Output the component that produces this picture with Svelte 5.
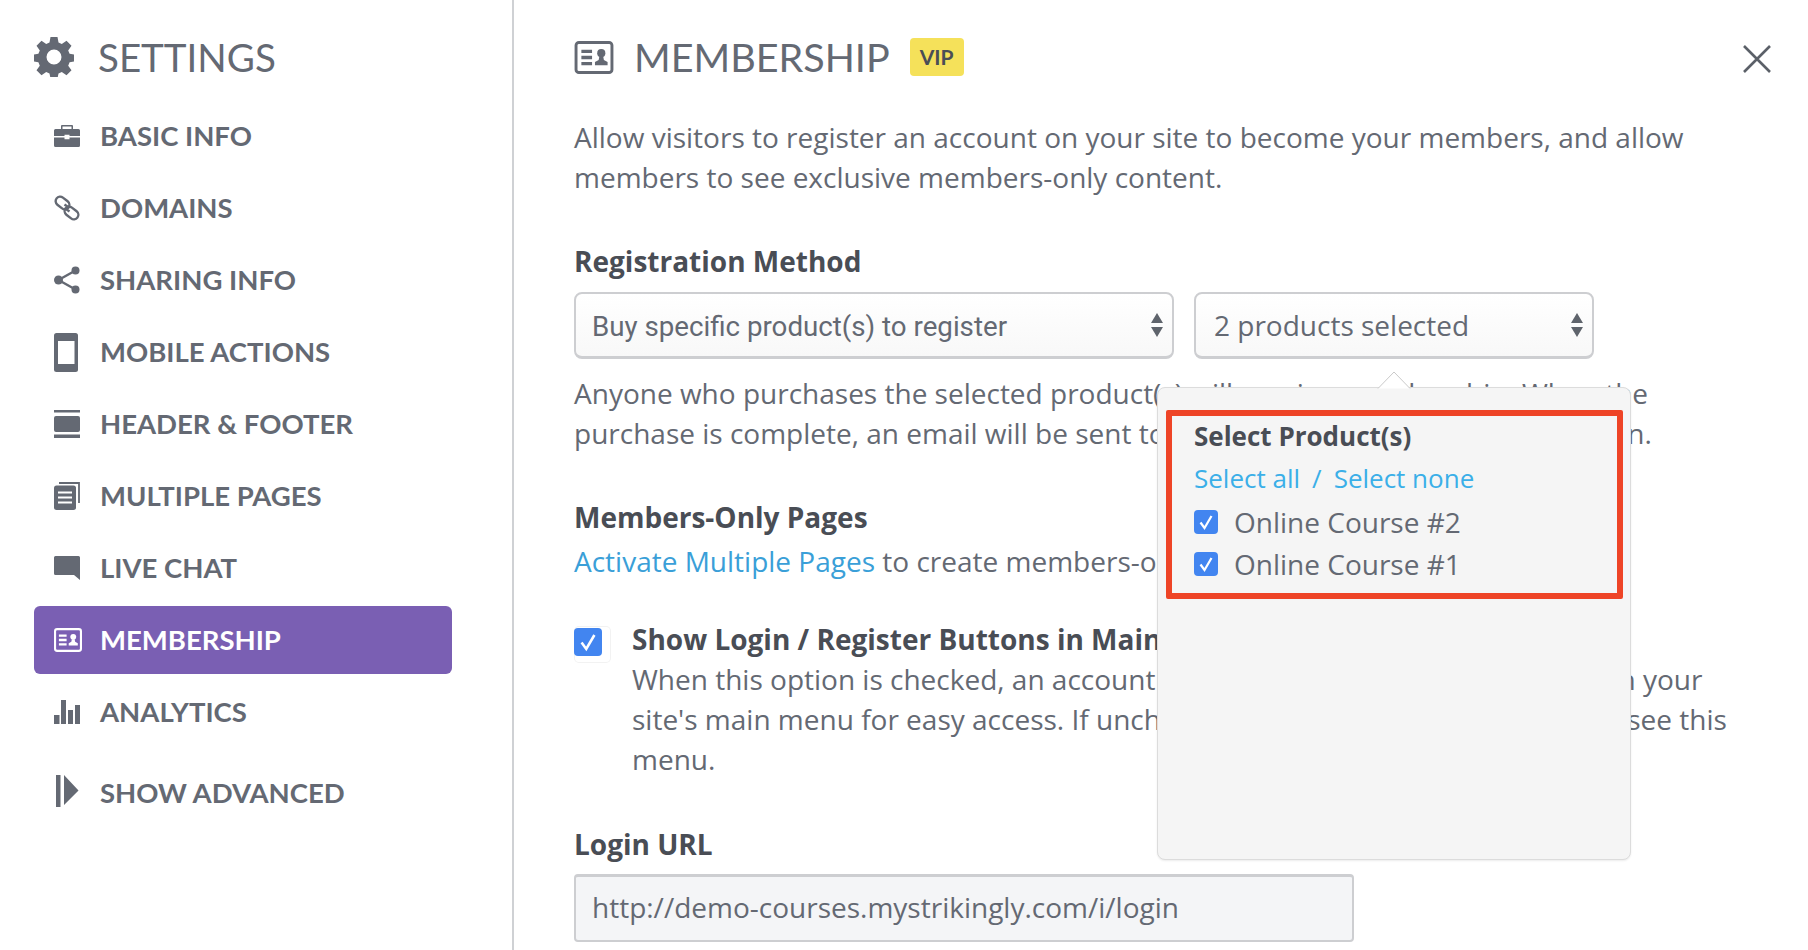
<script>
  const nav = [
    { id: 'brief', label: 'BASIC INFO' },
    { id: 'link', label: 'DOMAINS' },
    { id: 'share', label: 'SHARING INFO' },
    { id: 'mobile', label: 'MOBILE ACTIONS' },
    { id: 'layout', label: 'HEADER & FOOTER' },
    { id: 'pages', label: 'MULTIPLE PAGES' },
    { id: 'chat', label: 'LIVE CHAT' },
    { id: 'card', label: 'MEMBERSHIP', active: true },
    { id: 'bars', label: 'ANALYTICS' },
    { id: 'adv', label: 'SHOW ADVANCED', extra: true }
  ];
</script>

{#snippet card(cls)}
  <svg class={cls} viewBox="0 0 40 34" aria-hidden="true">
    <rect x="1.5" y="1.5" width="37" height="31" rx="3" fill="none" stroke="currentColor" stroke-width="3"/>
    <path fill="currentColor" d="M7 9h11v3.4H7zM7 15.3h11v3.4H7zM7 21.6h11v3.4H7z"/>
    <circle cx="27.5" cy="12.5" r="4.2" fill="currentColor"/>
    <path fill="currentColor" d="M25.5 16h4l.7 3.6 3.8 2V25H21v-3.4l3.8-2z"/>
  </svg>
{/snippet}

{#snippet check(cls)}
  <span class={cls}>
    <svg viewBox="0 0 24 24" aria-hidden="true"><path d="M6.5 12.5l4 5.5 7-12" fill="none" stroke="#fff" stroke-width="2.2"/></svg>
  </span>
{/snippet}

<div class="page">
  <aside class="side">
    <h2 class="side-title">
      <svg class="gear" viewBox="0 0 40 40" aria-hidden="true">
        <path fill="currentColor" fill-rule="evenodd" d="M16.5 0h7l1 5.6 3.3 1.4 4.700-3.300 5 5-3.300 4.700 1.400 3.300 5.400 1v6.600l-5.400 1-1.400 3.400 3.300 4.600-5 5-4.700-3.300-3.300 1.400-1 5.100h-7l-1-5.100-3.300-1.400-4.700 3.300-5-5 3.300-4.600-1.400-3.400-5.400-1v-6.600l5.400-1 1.400-3.300-3.300-4.700 5-5 4.700 3.300 3.300-1.400zM20 12.500a7.500 7.500 0 1 0 0 15 7.500 7.500 0 0 0 0-15z"/>
      </svg>
      <span>SETTINGS</span>
    </h2>
    <nav class="nav">
      {#each nav as item}
        <div class="item" class:active={item.active} class:extra={item.extra}>
          <span class="slot">
            {#if item.id === 'brief'}
              <svg width="26" height="22" viewBox="0 0 26 22"><path fill="currentColor" d="M8 0h10a1 1 0 0 1 1 1v3h-1.500V1.500h-9V4H7V1a1 1 0 0 1 1-1zM1.500 4h23A1.500 1.500 0 0 1 26 5.500V11H15.500V9.800h-5V11H0V5.500A1.500 1.500 0 0 1 1.500 4zM0 12.500h10.500v1.800h5v-1.800H26v8A1.500 1.500 0 0 1 24.500 22h-23A1.500 1.500 0 0 1 0 20.500z"/></svg>
            {:else if item.id === 'link'}
              <svg width="26" height="26" viewBox="0 0 26 26"><g fill="none" stroke="currentColor" stroke-width="2.400"><rect x="1" y="3.500" width="15" height="9" rx="4.500" transform="rotate(38 8.500 8)"/><rect x="10" y="13.500" width="15" height="9" rx="4.500" transform="rotate(38 17.500 18)"/><path d="M10.500 9.500l5 3.500M10.500 13l5 3.500"/></g></svg>
            {:else if item.id === 'share'}
              <svg width="26" height="28" viewBox="0 0 26 28"><g fill="currentColor"><circle cx="4.500" cy="14" r="4.500"/><circle cx="21.500" cy="4.500" r="4"/><circle cx="21.500" cy="23.500" r="4"/></g><path d="M21.500 4.500L4.500 14l17 9.500" fill="none" stroke="currentColor" stroke-width="2.400"/></svg>
            {:else if item.id === 'mobile'}
              <svg width="26" height="39" viewBox="0 0 26 39"><rect width="24" height="39" rx="2.500" fill="currentColor"/><rect x="4" y="8" width="16.500" height="23" fill="#fff"/></svg>
            {:else if item.id === 'layout'}
              <svg width="26" height="28" viewBox="0 0 26 28"><path fill="currentColor" d="M0 0h26v2.500H0zM2 6h22a2 2 0 0 1 2 2v12a2 2 0 0 1-2 2H2a2 2 0 0 1-2-2V8a2 2 0 0 1 2-2zM0 24.500h26V28H0z"/></svg>
            {:else if item.id === 'pages'}
              <svg width="26" height="28" viewBox="0 0 26 28"><path fill="none" stroke="currentColor" stroke-width="1.800" d="M5 1h20v20"/><rect y="3.500" width="22" height="24.500" rx="2.500" fill="currentColor"/><path stroke="#fff" stroke-width="2" d="M4 10.500h14M4 15.500h14M4 20.500h14"/></svg>
            {:else if item.id === 'chat'}
              <svg width="26" height="24" viewBox="0 0 26 24"><path fill="currentColor" d="M1.500 0h23A1.500 1.500 0 0 1 26 1.500V24l-6-5H1.500A1.500 1.500 0 0 1 0 17.500v-16A1.500 1.500 0 0 1 1.500 0z"/></svg>
            {:else if item.id === 'card'}
              {@render card('card-small')}
            {:else if item.id === 'bars'}
              <svg width="26" height="24" viewBox="0 0 26 24"><path fill="currentColor" d="M0 15h5.500v9H0zM7 0h5v24H7z"/><path fill="currentColor" d="M14 10h5v14h-5zM21 5h5v19h-5z"/></svg>
            {:else}
              <svg class="adv-icon" width="26" height="32" viewBox="0 0 26 32"><path fill="currentColor" d="M2 0h4.500v32H2zM10 0l14.500 15.500L10 30z"/></svg>
            {/if}
          </span>
          <span class="label">{item.label}</span>
        </div>
      {/each}
    </nav>
  </aside>

  <main class="main">
    <button class="close" aria-label="Close">
      <svg width="30" height="30" viewBox="0 0 30 30"><path d="M2 2l26 26M28 2L2 28" stroke="#5b6068" stroke-width="2.600" fill="none"/></svg>
    </button>

    <header class="head">
      {@render card('card-big')}
      <h1>MEMBERSHIP</h1>
      <span class="vip">VIP</span>
    </header>

    <p class="intro">Allow visitors to register an account on your site to become your members, and allow<br>members to see exclusive members-only content.</p>

    <h3 class="reg-label">Registration Method</h3>
    <div class="selects">
      <div class="select wide">
        <span>Buy specific product(s) to register</span>
        <span class="arrows"></span>
      </div>
      <div class="select narrow">
        <span>2 products selected</span>
        <span class="arrows"></span>
      </div>
    </div>
    <p class="desc">Anyone who purchases the selected product(s) will receive membership. When the<br>purchase is complete, an email will be sent to learners with their login information.</p>

    <h3 class="pages-label">Members-Only Pages</h3>
    <p class="activate"><a href="#top">Activate Multiple Pages</a> to create members-only pages.</p>

    <div class="option">
      <span class="big-check-wrap">{@render check('big-check')}</span>
      <div>
        <div class="opt-title">Show Login / Register Buttons in Main Menu</div>
        <p class="opt-text">When this option is checked, an account login or register buttons will show in your<br>site's main menu for easy access. If unchecked, visitors with a direct link can see this<br>menu.</p>
      </div>
    </div>

    <h3 class="url-label">Login URL</h3>
    <div class="url">http://demo-courses.mystrikingly.com/i/login</div>

    <div class="pop">
      <svg class="pop-arrow" width="34" height="18" viewBox="0 0 34 18" aria-hidden="true"><path d="M1 17.500L17 1l16 16.500" fill="#fff" stroke="#c9c9c9"/></svg>
      <div class="pop-body">
        <div class="pop-title">Select Product(s)</div>
        <div class="pop-links"><a href="#top">Select all</a><span class="sep">/</span><a href="#top">Select none</a></div>
        <label class="course">{@render check('small-check')}<span>Online Course #2</span></label>
        <label class="course">{@render check('small-check')}<span>Online Course #1</span></label>
      </div>
    </div>
  </main>
</div>

<style>
  :global(body) { margin: 0; background: #fff; overflow: hidden; }
  .page {
    display: flex;
    height: 950px;
    overflow: hidden;
    color: #646973;
    font-family: "Open Sans", sans-serif;
    font-size: 28px;
    line-height: 40px;
  }
  .side {
    flex: none;
    width: 478px;
    border-right: 2px solid #cfd1d4;
    padding: 37px 0 0 34px;
    color: #646973;
    font-family: Lato, sans-serif;
  }
  .side-title {
    display: flex;
    align-items: center;
    gap: 24px;
    margin: 0;
    height: 40px;
    font-size: 38.500px;
    line-height: 40px;
    font-weight: 400;
  }
  .gear { width: 40px; height: 40px; flex: none; }
  .nav { margin-top: 25px; }
  .item {
    display: flex;
    align-items: center;
    width: 418px;
    height: 68px;
    margin-bottom: 4px;
    padding-left: 20px;
    box-sizing: border-box;
    border-radius: 6px;
    font-size: 27.500px;
    font-weight: 700;
  }
  .item.extra { margin-top: 13px; }
  .item.active { background: #7a5fb3; color: #fff; }
  .slot { width: 46px; flex: none; display: flex; align-items: center; }
  .adv-icon { margin-bottom: 5px; }
  .card-small { width: 28px; height: 24px; }
  .card-big { width: 40px; height: 33px; flex: none; }

  .main {
    position: relative;
    flex: 1;
    padding: 37px 0 0 60px;
    min-width: 0;
  }
  .close {
    position: absolute;
    left: 1228px;
    top: 44px;
    padding: 0;
    border: 0;
    background: none;
    line-height: 0;
  }
  .head { display: flex; align-items: center; height: 40px; }
  .head h1 {
    margin: 0 20px 0 20px;
    font-family: Lato, sans-serif;
    font-size: 39.500px;
    line-height: 40px;
    font-weight: 400;
  }
  .vip {
    width: 54px;
    height: 38px;
    border-radius: 4px;
    background: #f5e15a;
    color: #4a4e56;
    font-family: Lato, sans-serif;
    font-size: 21px;
    font-weight: 700;
    line-height: 38px;
    text-align: center;
  }
  p { margin: 0; }
  h3 { margin: 0; font-size: 28px; line-height: 40px; font-weight: 700; color: #494d55; }
  .intro { margin-top: 40px; }
  .reg-label { margin-top: 44px; }
  .selects { display: flex; gap: 20px; margin-top: 11px; }
  .select {
    position: relative;
    height: 67px;
    box-sizing: border-box;
    border: 2px solid #cdced1;
    border-bottom-width: 3px;
    border-radius: 8px;
    background: linear-gradient(#fff, #f8f8f8);
    display: flex;
    align-items: center;
    padding-left: 16px;
  }
  .wide { width: 600px; font-family: Roboto, sans-serif; font-size: 27.700px; padding-top: 3px; }
  .narrow { width: 400px; padding-left: 18px; }
  .arrows {
    position: absolute;
    right: 9px;
    top: 19px;
    width: 0;
    height: 0;
    border-left: 6px solid transparent;
    border-right: 6px solid transparent;
    border-bottom: 10px solid #5f646c;
  }
  .arrows::after {
    content: "";
    position: absolute;
    left: -6px;
    top: 14px;
    border-left: 6px solid transparent;
    border-right: 6px solid transparent;
    border-top: 10px solid #5f646c;
  }
  .desc { margin-top: 14px; }
  .pages-label { margin-top: 44px; }
  .activate { margin-top: 4px; }
  a { color: #3a9fd8; text-decoration: none; }
  .option { display: flex; margin-top: 38px; }
  .big-check-wrap {
    width: 37px;
    height: 37px;
    flex: none;
    margin: 7px 21px 0 0;
    border-radius: 5px;
    box-shadow: inset 0 0 0 1px #f2f2f2;
  }
  .big-check {
    display: block;
    width: 28px;
    height: 28px;
    margin-top: 2px;
    border-radius: 4px;
    background: #4285f0;
  }
  .big-check svg, .small-check svg { display: block; width: 100%; height: 100%; }
  .opt-title { font-weight: 700; color: #494d55; }
  .url-label { margin-top: 45px; }
  .url {
    width: 780px;
    height: 68px;
    margin-top: 10px;
    box-sizing: border-box;
    border: 2px solid #cdced1;
    border-top-width: 3px;
    border-radius: 4px;
    background: #f4f5f7;
    padding-left: 16px;
    line-height: 61px;
  }

  .pop {
    position: absolute;
    left: 643px;
    top: 387px;
    width: 474px;
    height: 473px;
    box-sizing: border-box;
    border: 1px solid #dcdcdc;
    border-radius: 8px;
    background: #f5f5f5;
    box-shadow: 0 1px 2px rgba(0,0,0,.08);
  }
  .pop-arrow {
    position: absolute;
    left: 219px;
    top: -17px;
  }
  .pop-body {
    position: absolute;
    left: 8px;
    top: 22px;
    width: 457px;
    height: 189px;
    box-sizing: border-box;
    border: 6px solid #ee4426;
    border-radius: 2px;
    padding: 0 0 0 22px;
    background: #f5f5f5;
  }
  .pop-title { font-size: 26px; font-weight: 700; color: #494d55; line-height: 40px; }
  .pop-links { font-size: 26px; margin-top: 2px; line-height: 40px; color: #3bafe8; }
  .pop-links a { color: #3bafe8; }
  .sep { margin: 0 12px; }
  .course { display: flex; align-items: center; height: 42px; }
  .pop-links + .course { margin-top: 3px; }
  .small-check {
    display: block;
    width: 24px;
    height: 24px;
    margin-right: 16px;
    border-radius: 4px;
    background: #4285f0;
  }
</style>
